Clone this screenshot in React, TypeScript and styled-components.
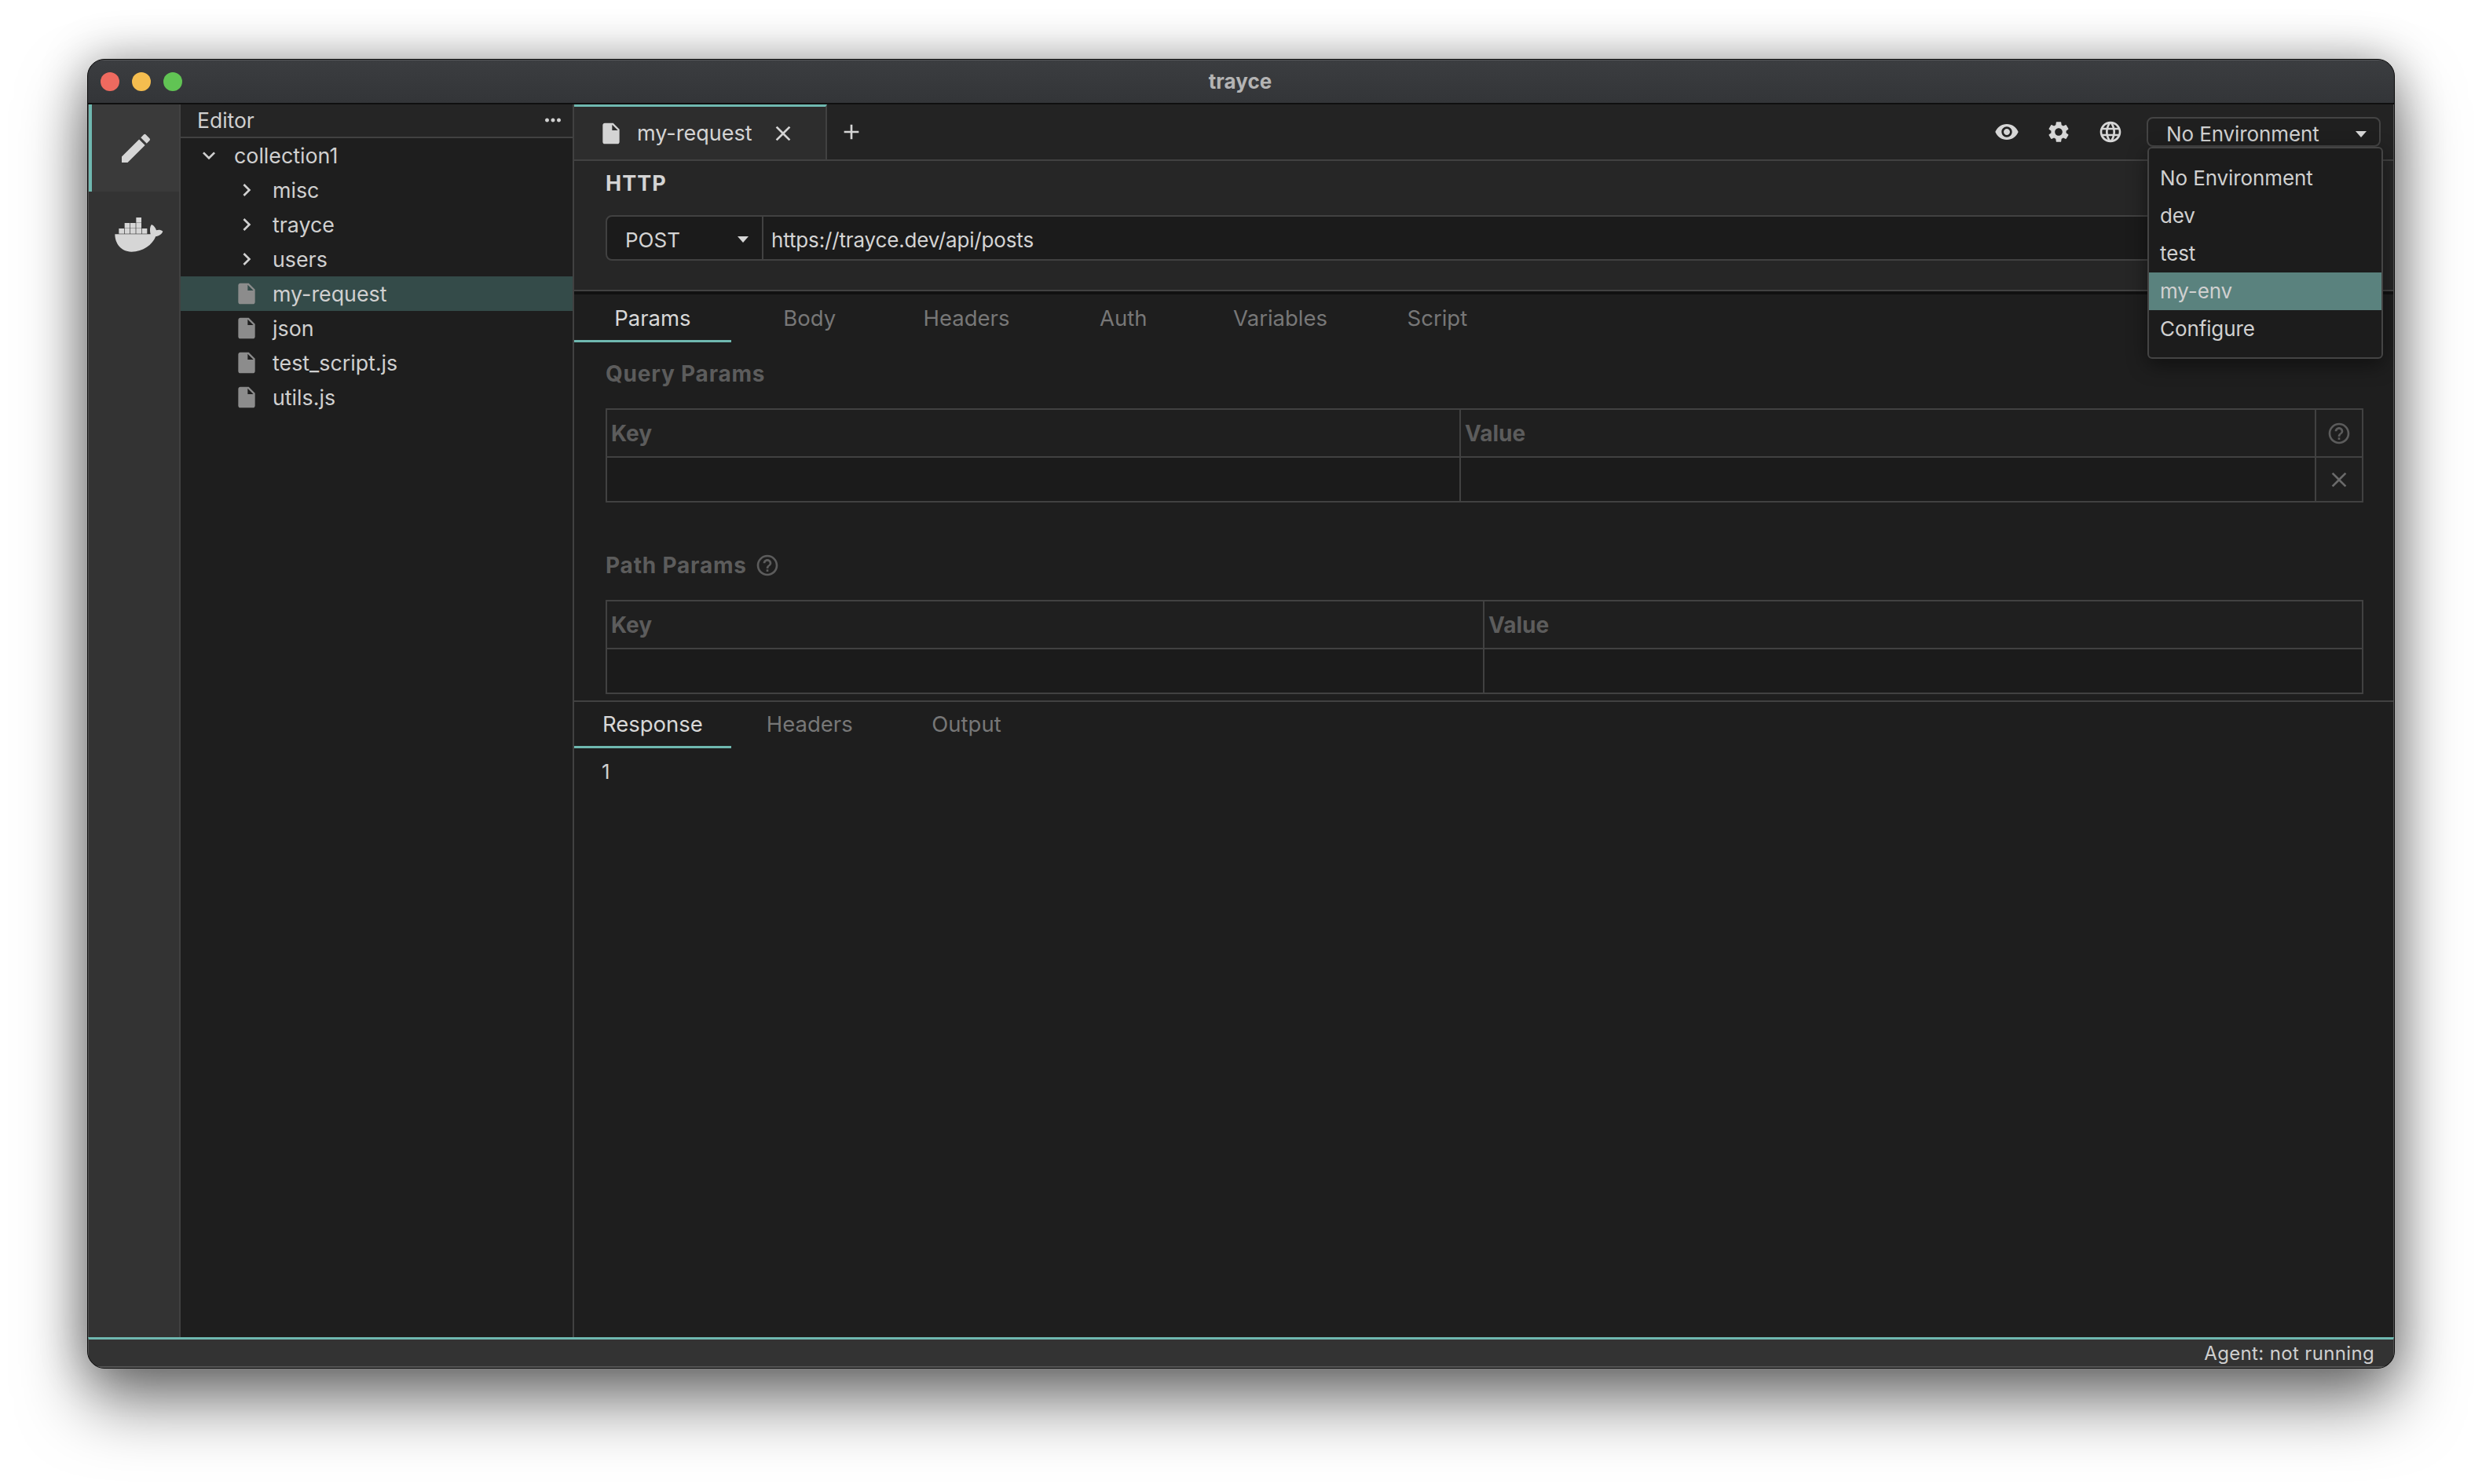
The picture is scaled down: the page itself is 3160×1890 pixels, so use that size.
import React from "react";
import styled, { createGlobalStyle } from "styled-components";
import {
  MdEdit,
  MdChevronRight,
  MdExpandMore,
  MdInsertDriveFile,
  MdClose,
  MdAdd,
  MdVisibility,
  MdSettings,
  MdLanguage,
  MdMoreHoriz,
  MdHelpOutline,
} from "react-icons/md";

const Global = createGlobalStyle`
  html, body { margin: 0; padding: 0; background: #fff; }
  body { width: 3160px; height: 1890px; overflow: hidden; font-family: Inter, "Liberation Sans", sans-serif; }
  * { box-sizing: border-box; }
`;

const Page = styled.div`
  padding: 75px 0 0 111px;
`;

const Window = styled.div`
  width: 2938px;
  height: 1668px;
  border-radius: 22px;
  background: #1e1e1e;
  border: 1px solid #0a0a0a;
  box-shadow: 0 44px 84px rgba(0, 0, 0, 0.5), 0 0 60px rgba(0, 0, 0, 0.32);
  display: flex;
  flex-direction: column;
  overflow: hidden;
`;

const TitleBar = styled.div`
  height: 57px;
  flex: none;
  display: flex;
  align-items: center;
  padding-left: 16px;
  position: relative;
  background: linear-gradient(#3b3d40, #333538);
  border-bottom: 2px solid #0f0f0f;
  border-top: 1px solid #56585a;
`;

const Dots = styled.div`
  display: flex;
  gap: 16px;
`;

const Dot = styled.span<{ $c: string }>`
  width: 24px;
  height: 24px;
  border-radius: 50%;
  background: ${(p) => p.$c};
`;

const Title = styled.div`
  position: absolute;
  left: 0;
  right: 2px;
  bottom: 11px;
  text-align: center;
  color: #b4b4b4;
  font-size: 26px;
  font-weight: 700;
  line-height: 32px;
`;

const Body = styled.div`
  flex: 1;
  min-height: 0;
  display: flex;
  border-left: 1px solid #555;
  border-right: 1px solid #555;
`;

const Activity = styled.div`
  width: 117px;
  flex: none;
  background: #333;
  border-right: 2px solid #414141;
`;

const ActivityItem = styled.div<{ $on?: boolean }>`
  height: ${(p) => (p.$on ? 111 : 110)}px;
  display: flex;
  align-items: center;
  justify-content: center;
  color: #d6d6d6;
  background: ${(p) => (p.$on ? "#3a3a3a" : "transparent")};
  border-left: 4px solid ${(p) => (p.$on ? "#6fb8b0" : "transparent")};
`;

const Explorer = styled.div`
  width: 501px;
  flex: none;
  background: #1e1e1e;
  border-right: 2px solid #414141;
`;

const ExplorerHeader = styled.div`
  height: 43px;
  display: flex;
  align-items: center;
  justify-content: space-between;
  padding: 0 10px 2px 21px;
  background: #252525;
  border-bottom: 2px solid #414141;
  color: #d0d0d0;
  font-size: 26.5px;
`;

const TreeRow = styled.div<{ $depth: number; $on?: boolean }>`
  height: 44px;
  display: flex;
  align-items: center;
  gap: ${(p) => (p.$depth ? 17 : 16)}px;
  padding-left: ${(p) => (p.$depth ? 68 : 20)}px;
  font-size: 26.8px;
  color: #d0d0d0;
  background: ${(p) => (p.$on ? "#344b49" : "transparent")};
`;

const FileGlyph = styled(MdInsertDriveFile)`
  color: #8c8c8c;
`;

const Main = styled.div`
  flex: 1;
  min-width: 0;
  display: flex;
  flex-direction: column;
`;

const TabBar = styled.div`
  height: 72px;
  flex: none;
  display: flex;
  align-items: center;
  background: #232323;
  border-bottom: 2px solid #414141;
`;

const OpenTab = styled.div`
  width: 322px;
  height: 70px;
  display: flex;
  align-items: center;
  padding-left: 31px;
  gap: 17px;
  background: #2d2d2d;
  border-top: 3px solid #6fb8b0;
  border-right: 2px solid #414141;
  color: #d4d4d4;
  font-size: 27px;
`;

const TabClose = styled(MdClose)`
  margin-left: 6px;
`;

const AddTab = styled(MdAdd)`
  margin-left: 15px;
  color: #d6d6d6;
`;

const Tools = styled.div`
  margin-left: auto;
  display: flex;
  align-items: center;
  gap: 34px;
  padding-right: 16px;
  color: #d6d6d6;
`;

const EnvSelect = styled.div`
  position: relative;
  width: 298px;
  height: 38px;
  margin: 0 0 0 -4px;
  padding: 6px 15px 0 23px;
  display: flex;
  align-items: center;
  justify-content: space-between;
  border: 2px solid #444;
  border-radius: 8px;
  background: #1f1f1f;
  color: #d0d0d0;
  font-size: 26px;
  letter-spacing: -0.1px;
  line-height: 1;
`;

const Menu = styled.div`
  position: absolute;
  top: 36px;
  left: -1px;
  width: 300px;
  height: 270px;
  padding: 14px 0 0;
  background: #1c1c1c;
  border: 2px solid #444;
  border-radius: 6px;
  box-shadow: 0 8px 26px rgba(0, 0, 0, 0.45);
  z-index: 2;
`;

const MenuItem = styled.div<{ $on?: boolean }>`
  height: 48px;
  display: flex;
  align-items: center;
  padding-left: 14px;
  font-size: 26px;
  letter-spacing: -0.1px;
  color: #d0d0d0;
  background: ${(p) => (p.$on ? "#5a827e" : "transparent")};
`;

const Request = styled.div`
  height: 170px;
  flex: none;
  padding: 14px 0 0 40px;
  background: #262626;
  border-bottom: 4px solid #111;
  box-shadow: inset 0 -2px 0 #414141;
`;

const RequestTitle = styled.div`
  font-size: 27px;
  line-height: 30px;
  font-weight: 700;
  color: #d4d4d4;
  letter-spacing: 1px;
`;

const UrlBar = styled.div`
  margin-top: 25px;
  width: 2240px;
  height: 58px;
  display: flex;
  border: 2px solid #414141;
  border-radius: 8px;
  background: #1b1b1b;
  font-size: 26px;
  color: #d4d4d4;
`;

const MethodCell = styled.div`
  width: 199px;
  flex: none;
  display: flex;
  align-items: center;
  justify-content: space-between;
  padding: 4px 16px 0 23px;
  border-right: 2px solid #414141;
`;

const UrlText = styled.div`
  display: flex;
  align-items: center;
  padding: 4px 0 0 10px;
  letter-spacing: -0.15px;
`;

const TabStrip = styled.div<{ $h: number }>`
  flex: none;
  display: flex;
  height: ${(p) => p.$h}px;
`;

const StripTab = styled.div<{ $on?: boolean; $shift?: number }>`
  width: 199.8px;
  display: flex;
  align-items: center;
  justify-content: center;
  padding-top: ${(p) => p.$shift ?? 0}px;
  font-size: 27.5px;
  color: ${(p) => (p.$on ? "#d8d8d8" : "#777")};
  border-bottom: 3px solid ${(p) => (p.$on ? "#6fb8b0" : "transparent")};
`;

const Params = styled.div`
  height: 456px;
  flex: none;
  padding: 25px 40px 0;
`;

const SectionLabel = styled.div<{ $gap: number; $top?: number }>`
  display: flex;
  align-items: center;
  gap: 10px;
  height: 30px;
  margin-top: ${(p) => p.$top ?? 0}px;
  margin-bottom: ${(p) => p.$gap}px;
  font-size: 28px;
  font-weight: 700;
  color: #5c5c5c;
  letter-spacing: 0.8px;
`;

const ParamTable = styled.div<{ $cols: string }>`
  display: grid;
  width: 2238px;
  grid-template-columns: ${(p) => p.$cols};
  grid-template-rows: 59px 57px;
  border: 2px solid #414141;
`;

const Cell = styled.div<{ $body?: boolean; $last?: boolean }>`
  display: flex;
  align-items: center;
  padding-left: 5px;
  font-size: 28px;
  font-weight: 700;
  color: #5c5c5c;
  background: ${(p) => (p.$body ? "#1b1b1b" : "#1f1f1f")};
  border-right: ${(p) => (p.$last ? "none" : "2px solid #414141")};
  border-top: ${(p) => (p.$body ? "2px solid #414141" : "none")};
`;

const IconCell = styled(Cell)`
  justify-content: center;
  padding-left: 0;
  background: #1f1f1f;
`;

const ResponseArea = styled.div`
  flex: 1;
  border-top: 2px solid #414141;
  display: flex;
  flex-direction: column;
  background: #1e1e1e;
`;

const ResponseBody = styled.div`
  padding: 14px 0 0 35px;
  font-size: 26px;
  color: #d0d0d0;
`;

const StatusBar = styled.div`
  height: 39px;
  flex: none;
  display: flex;
  align-items: center;
  justify-content: flex-end;
  padding-right: 24px;
  background: #333;
  border-top: 3px solid #6fb8b0;
  border-bottom: 2px solid #555;
  border-left: 1px solid #555;
  border-right: 1px solid #555;
  color: #cfcfcf;
  font-size: 24px;
  letter-spacing: 0.35px;
`;

const DockerMark = styled.svg`
  margin: 2px 0 0 12px;
`;

const Caret = () => (
  <svg width="16" height="10" viewBox="0 0 16 10">
    <path d="M1 1h14L8 9z" fill="#d6d6d6" />
  </svg>
);

const Docker = () => (
  <DockerMark width="80" height="60" viewBox="0 0 240 180" fill="#d6d6d6">
    {[37, 59, 81, 103, 125].map((x) => (
      <rect key={x} x={x} y="63" width="20" height="20" />
    ))}
    {[59, 81, 103].map((x) => (
      <rect key={x} x={x} y="42" width="20" height="20" />
    ))}
    <rect x="103" y="21" width="20" height="20" />
    <path d="M22 85H158C155 70 155 56 162 48C172 52 178 62 180 70C188 67 198 68 205 74C200 86 188 92 178 93C165 125 130 152 85 152C45 152 22 120 22 85Z" />
  </DockerMark>
);

const tree = [
  { name: "misc", dir: true },
  { name: "trayce", dir: true },
  { name: "users", dir: true },
  { name: "my-request", on: true },
  { name: "json" },
  { name: "test_script.js" },
  { name: "utils.js" },
];

const requestTabs = ["Params", "Body", "Headers", "Auth", "Variables", "Script"];

export default function App() {
  return (
    <Page>
      <Global />
      <Window>
        <TitleBar>
          <Title>trayce</Title>
          <Dots>
            <Dot $c="#ee6a5f" />
            <Dot $c="#f5bd4f" />
            <Dot $c="#61c454" />
          </Dots>
        </TitleBar>
        <Body>
          <Activity>
            <ActivityItem $on>
              <MdEdit size={48} />
            </ActivityItem>
            <ActivityItem>
              <Docker />
            </ActivityItem>
          </Activity>
          <Explorer>
            <ExplorerHeader>
              Editor
              <MdMoreHoriz size={30} />
            </ExplorerHeader>
            <TreeRow $depth={0}>
              <MdExpandMore size={32} />
              collection1
            </TreeRow>
            {tree.map((t) => (
              <TreeRow key={t.name} $depth={1} $on={t.on}>
                {t.dir ? <MdChevronRight size={32} /> : <FileGlyph size={32} />}
                {t.name}
              </TreeRow>
            ))}
          </Explorer>
          <Main>
            <TabBar>
              <OpenTab>
                <MdInsertDriveFile size={32} />
                my-request
                <TabClose size={32} />
              </OpenTab>
              <AddTab size={32} />
              <Tools>
                <MdVisibility size={32} />
                <MdSettings size={32} />
                <MdLanguage size={32} />
                <EnvSelect>
                  No Environment
                  <Caret />
                  <Menu>
                    <MenuItem>No Environment</MenuItem>
                    <MenuItem>dev</MenuItem>
                    <MenuItem>test</MenuItem>
                    <MenuItem $on>my-env</MenuItem>
                    <MenuItem>Configure</MenuItem>
                  </Menu>
                </EnvSelect>
              </Tools>
            </TabBar>
            <Request>
              <RequestTitle>HTTP</RequestTitle>
              <UrlBar>
                <MethodCell>
                  POST
                  <Caret />
                </MethodCell>
                <UrlText>https://trayce.dev/api/posts</UrlText>
              </UrlBar>
            </Request>
            <TabStrip $h={61}>
              {requestTabs.map((t, i) => (
                <StripTab key={t} $on={i === 0} $shift={2}>
                  {t}
                </StripTab>
              ))}
            </TabStrip>
            <Params>
              <SectionLabel $gap={29}>Query Params</SectionLabel>
              <ParamTable $cols="1087px 1fr 58px">
                <Cell>Key</Cell>
                <Cell>Value</Cell>
                <IconCell $last>
                  <MdHelpOutline size={32} color="#5c5c5c" />
                </IconCell>
                <Cell $body />
                <Cell $body />
                <IconCell $body $last>
                  <MdClose size={32} color="#6a6a6a" />
                </IconCell>
              </ParamTable>
              <SectionLabel $gap={29} $top={65}>
                Path Params
                <MdHelpOutline size={32} />
              </SectionLabel>
              <ParamTable $cols="1fr 1fr">
                <Cell>Key</Cell>
                <Cell $last>Value</Cell>
                <Cell $body />
                <Cell $body $last />
              </ParamTable>
            </Params>
            <ResponseArea>
              <TabStrip $h={59}>
                <StripTab $on>Response</StripTab>
                <StripTab>Headers</StripTab>
                <StripTab>Output</StripTab>
              </TabStrip>
              <ResponseBody>1</ResponseBody>
            </ResponseArea>
          </Main>
        </Body>
        <StatusBar>Agent: not running</StatusBar>
      </Window>
    </Page>
  );
}
